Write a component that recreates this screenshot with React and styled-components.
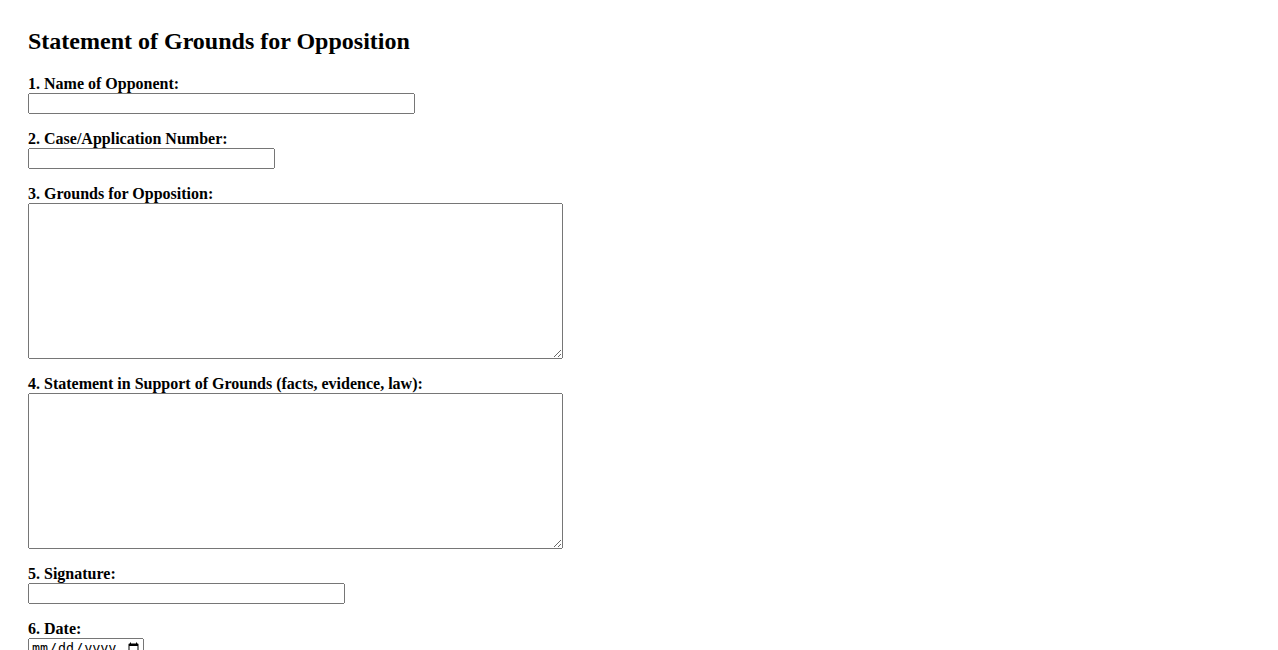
import React from 'react';
import styled, { createGlobalStyle } from 'styled-components';

const GlobalStyle = createGlobalStyle`
  body {
    margin: 8px;
    background: #ffffff;
    color: #000000;
    font-family: "Liberation Serif", "Times New Roman", serif;
  }
`;

const Page = styled.div`
  padding: 20px;
`;

const Title = styled.h2`
  font-size: 24px;
  font-weight: bold;
  margin: 0 0 20px;
`;

const Field = styled.div`
  margin-bottom: 16px;
`;

const Label = styled.label`
  display: block;
  font-size: 16px;
  font-weight: bold;
`;

const TextInput = styled.input`
  display: block;
  box-sizing: border-box;
  width: ${p => p.$width}px;
  height: 21px;
  margin: 0;
`;

const TextArea = styled.textarea`
  display: block;
  box-sizing: border-box;
  width: 535px;
  height: 156px;
  margin: 0;
`;

const fields = [
  { id: 'opponent', label: '1. Name of Opponent:', width: 387 },
  { id: 'caseNumber', label: '2. Case/Application Number:', width: 247 },
  { id: 'grounds', label: '3. Grounds for Opposition:', area: true },
  { id: 'support', label: '4. Statement in Support of Grounds (facts, evidence, law):', area: true },
  { id: 'signature', label: '5. Signature:', width: 317 },
  { id: 'date', label: '6. Date:', width: 116, type: 'date' },
];

export default function App() {
  return (
    <>
      <GlobalStyle />
      <Page>
        <Title>Statement of Grounds for Opposition</Title>
        <form>
          {fields.map(f => (
            <Field key={f.id}>
              <Label htmlFor={f.id}>{f.label}</Label>
              {f.area
                ? <TextArea id={f.id} />
                : <TextInput id={f.id} type={f.type || 'text'} $width={f.width} />}
            </Field>
          ))}
        </form>
      </Page>
    </>
  );
}
